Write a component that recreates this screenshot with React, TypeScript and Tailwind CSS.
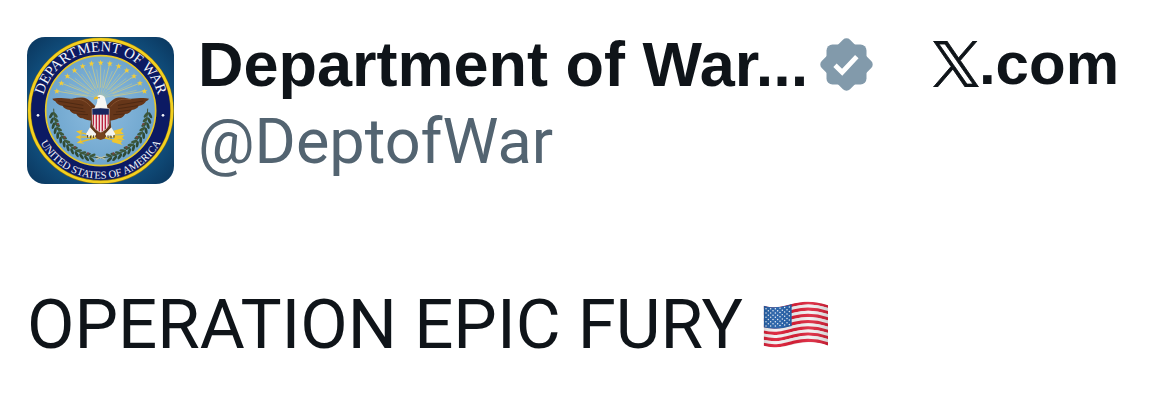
import type { ReactNode } from 'react';

const STARS = Array.from({ length: 13 }, (_, i) => -156 + i * 11);
const LEAVES = Array.from({ length: 13 }, (_, i) => 174 - i * 6.2);

const polar = (r: number, deg: number) => {
  const a = (deg * Math.PI) / 180;
  return { x: 242 + r * Math.cos(a), y: 242 + r * Math.sin(a) };
};

function Star({ x, y }: { x: number; y: number }) {
  return (
    <path
      transform={`translate(${x} ${y})`}
      d="M0-9 2.3-3 9-2.7 3.6 1.4 5.6 8 0 4-5.6 8-3.6 1.4-9-2.7-2.3-3Z"
      fill="#f3cd38"
    />
  );
}

function Branch() {
  return (
    <g>
      <path d="M101 236C102 310 150 376 240 384" fill="none" stroke="#44573a" strokeWidth="3" />
      {LEAVES.map((deg, i) => {
        const p = polar(143, deg);
        return (
          <g key={deg} transform={`translate(${p.x} ${p.y}) rotate(${deg + 90})`}>
            <ellipse cx="-2" cy="-6" rx="10" ry="4.2" transform="rotate(34)" fill="#2f4a35" />
            <ellipse cx="-2" cy="6" rx="10" ry="4.2" transform="rotate(-34)" fill="#3c573a" />
            {i % 3 === 2 && <circle cx="2" cy="9" r="3.5" fill="#744440" />}
          </g>
        );
      })}
    </g>
  );
}

function Wing() {
  return (
    <g>
      <path
        d="M97 206C118 201 140 208 158 206C174 202 190 200 202 207C214 214 220 226 232 232L226 272C212 274 198 270 188 265C180 266 173 260 169 252C159 252 152 247 149 240C138 239 131 234 128 228C116 226 108 219 106 214C101 212 99 209 97 206Z"
        fill="#663619"
      />
      <path
        d="M114 213 190 226M130 227 190 236M150 240 196 246M170 252 204 254"
        stroke="#42230f"
        strokeWidth="2"
        fill="none"
      />
      <path d="M150 209C178 204 196 210 212 230" stroke="#84502e" strokeWidth="3" fill="none" />
    </g>
  );
}

function Mirror({ children }: { children: ReactNode }) {
  return (
    <>
      {children}
      <g transform="translate(484 0) scale(-1 1)">{children}</g>
    </>
  );
}

function Seal() {
  return (
    <svg viewBox="21 21 441 441" className="block h-full w-full" role="img" aria-label="Department of War seal">
      <defs>
        <radialGradient id="backdrop" r="0.7">
          <stop offset="0.66" stopColor="#11507f" />
          <stop offset="1" stopColor="#0a355c" />
        </radialGradient>
        <radialGradient id="sky">
          <stop offset="0.3" stopColor="#83b5da" />
          <stop offset="1" stopColor="#6ea5cd" />
        </radialGradient>
        <path id="arcTop" d="M64 242A178 178 0 0 1 420 242" />
        <path id="arcBottom" d="M38 242A204 204 0 0 0 446 242" />
        <clipPath id="shield">
          <path d="M216 236Q242 232 268 236L267 280Q264 298 242 307Q220 298 217 280Z" />
        </clipPath>
      </defs>

      <rect x="21" y="21" width="441" height="441" fill="url(#backdrop)" />
      <circle cx="242" cy="242" r="214" fill="#0c1a63" stroke="#8c7415" strokeWidth="11" />
      <circle cx="242" cy="242" r="214" fill="none" stroke="#f4d11f" strokeWidth="8" />
      <circle cx="242" cy="242" r="165" fill="url(#sky)" stroke="#e8c828" strokeWidth="5" />

      <g fill="#f3f5fa" fontFamily="'Liberation Serif', serif" textAnchor="middle">
        <text fontSize="44">
          <textPath href="#arcTop" startOffset="50%">DEPARTMENT OF WAR</textPath>
        </text>
        <text fontSize="32">
          <textPath href="#arcBottom" startOffset="50%">UNITED STATES OF AMERICA</textPath>
        </text>
      </g>
      <circle cx="54" cy="256" r="4" fill="#f3f5fa" />
      <circle cx="429" cy="256" r="4" fill="#f3f5fa" />

      {STARS.map((deg, i) => {
        const p = polar(144, deg);
        return (
          <g key={deg}>
            <path d={`M${242 + (p.x - 242) * 0.3} ${205 + (p.y - 205) * 0.3}L${p.x} ${p.y}`} stroke="#dccf76" strokeWidth="2" />
            {i < 12 && (
              <path
                d={`M242 205L${polar(124, deg + 5.5).x} ${polar(124, deg + 5.5).y}`}
                stroke="#c5cb8d"
                strokeWidth="1.5"
              />
            )}
            <Star x={p.x} y={p.y} />
          </g>
        );
      })}

      <Mirror>
        <Branch />
      </Mirror>
      <path d="M228 378 242 384 256 378M228 388 242 382 256 388" stroke="#c8c49a" strokeWidth="3" fill="none" />

      {/* arrows */}
      <g stroke="#e9bd2a" strokeWidth="4" fill="none">
        <path d="M180 308 300 334M174 321H308M180 336 300 304" />
      </g>
      <g fill="#f0c62e">
        <path d="M168 304 188 300 182 309 188 317ZM166 321 184 314 180 321 184 329ZM170 339 184 328 184 336 194 341Z" />
        <path d="M280 302 310 294 303 304 312 312 282 314ZM282 316 314 316 306 323 314 330 282 328ZM278 326 308 332 302 338 308 345 276 336Z" />
      </g>

      <Mirror>
        <Wing />
      </Mirror>
      <path d="M216 232H268L274 298Q266 322 242 326Q218 322 210 298Z" fill="#633719" />
      <path d="M210 292 198 312 206 322 214 315 222 325 229 312ZM274 292 286 312 278 322 270 315 262 325 255 312Z" fill="#f4f4ef" />
      <path d="M232 306H252L256 325 242 330 228 325Z" fill="#75431f" />
      <path d="M203 315V323M212 317V325M221 316V324M264 316V324M273 317V325M282 315V323" stroke="#453019" strokeWidth="3" />
      <path d="M230 201C235 193 250 193 255 204C258 216 261 226 263 236H222C228 226 232 219 232 211Z" fill="#f8f8f4" />
      <path d="M234 200C226 199 221 202 221 210L226 207 234 208Z" fill="#f0bd22" />
      <circle cx="237" cy="203" r="1.8" fill="#463217" />

      <g clipPath="url(#shield)">
        <rect x="214" y="232" width="56" height="78" fill="#f5f1f0" />
        <path d="M220 252V310M229 252V310M238 252V310M247 252V310M256 252V310M265 252V310" stroke="#b9233e" strokeWidth="4.5" />
        <rect x="214" y="230" width="56" height="24" fill="#17265f" />
      </g>
      <path d="M216 236Q242 232 268 236L267 280Q264 298 242 307Q220 298 217 280Z" fill="none" stroke="#e2dadb" strokeWidth="1.5" />
    </svg>
  );
}

function VerifiedBadge() {
  return (
    <svg viewBox="0 0 53 53" className="h-[53px] w-[53px] shrink-0" role="img" aria-label="Verified account">
      <g fill="#829aab">
        <rect x="6.5" y="6.5" width="40" height="40" rx="6" />
        <rect x="6.5" y="6.5" width="40" height="40" rx="5" transform="rotate(45 26.5 26.5)" />
      </g>
      <path d="M15 27.2 22.2 34.2 36.8 18.6" fill="none" stroke="#fff" strokeWidth="4.8" />
    </svg>
  );
}

function XLogo() {
  return (
    <svg viewBox="0 0 1200 1227" className="h-[46px] w-[46px]" fill="#0f1419" stroke="#0f1419" strokeWidth="24" aria-hidden="true">
      <path d="M714.163 519.284L1160.89 0H1055.03L667.137 450.887L357.328 0H0L468.492 681.821L0 1226.37H105.866L515.491 750.218L842.672 1226.37H1200L714.137 519.284H714.163ZM569.165 687.828L521.697 619.934L144.011 79.6944H306.615L611.412 515.685L658.88 583.579L1055.08 1150.3H892.476L569.165 687.854V687.828Z" />
    </svg>
  );
}

function Flag() {
  const stripes = Array.from({ length: 13 }, (_, i) => i);

  return (
    <svg viewBox="45 44 198 144" className="h-12 w-[66px]" role="img" aria-label="United States flag">
      <defs>
        <clipPath id="flag">
          <path d="M47 58C85 68 110 59 140 51S205 44 240 57V178C205 164 175 166 140 174S85 188 47 178Z" />
        </clipPath>
        <linearGradient id="folds">
          <stop offset="0" stopColor="#000" stopOpacity="0.12" />
          <stop offset="0.2" stopColor="#fff" stopOpacity="0.06" />
          <stop offset="0.45" stopColor="#000" stopOpacity="0.06" />
          <stop offset="0.7" stopColor="#fff" stopOpacity="0.1" />
          <stop offset="1" stopColor="#000" stopOpacity="0.14" />
        </linearGradient>
      </defs>
      <g clipPath="url(#flag)">
        <rect x="45" y="40" width="198" height="150" fill="#f3f1f2" />
        {stripes.map((i) => (
          <path
            key={i}
            d="M45 62C85 72 110 63 140 55S205 48 242 61"
            transform={`translate(0 ${i * 9.35})`}
            fill="none"
            stroke={i % 2 === 0 ? '#dc2038' : '#f3f1f2'}
            strokeWidth="9.6"
          />
        ))}
        <path d="M45 56C80 67 105 61 131 53V119C105 126 80 131 45 123Z" fill="#2560a8" />
        {Array.from({ length: 9 }, (_, row) =>
          Array.from({ length: row % 2 ? 5 : 6 }, (_, col) => (
            <circle
              key={`${row}-${col}`}
              cx={54 + col * 14 + (row % 2 ? 7 : 0)}
              cy={67 + row * 6.5 - Math.max(0, col - 2) * 1.6}
              r="2.2"
              fill="#eef3fa"
            />
          )),
        )}
        <rect x="45" y="40" width="198" height="150" fill="url(#folds)" />
      </g>
    </svg>
  );
}

export default function App() {
  return (
    <article className="bg-white px-[27px] pt-[25px] pb-11 font-['Roboto',sans-serif] text-[#0f1419]">
      <header className="flex items-start gap-6">
        <div className="mt-3 h-[147px] w-[147px] shrink-0 overflow-hidden rounded-[18px]">
          <Seal />
        </div>

        <div className="min-w-0 flex-1">
          <div className="flex items-center gap-3">
            <h1 className="truncate font-['Liberation_Sans',sans-serif] text-[63px] leading-[78px] font-bold">
              Department of War...
            </h1>
            <VerifiedBadge />
          </div>
          <p className="text-[63px] leading-[78px] text-[#536471]">@DeptofWar</p>
        </div>

        <div className="mr-6 flex shrink-0 items-center font-['Liberation_Sans',sans-serif] text-[60px] leading-[78px] font-bold">
          <XLogo />
          <span>.com</span>
        </div>
      </header>

      <p className="mt-[102px] flex items-center gap-5 text-[69px] leading-[78px]">
        OPERATION EPIC FURY
        <Flag />
      </p>
    </article>
  );
}
